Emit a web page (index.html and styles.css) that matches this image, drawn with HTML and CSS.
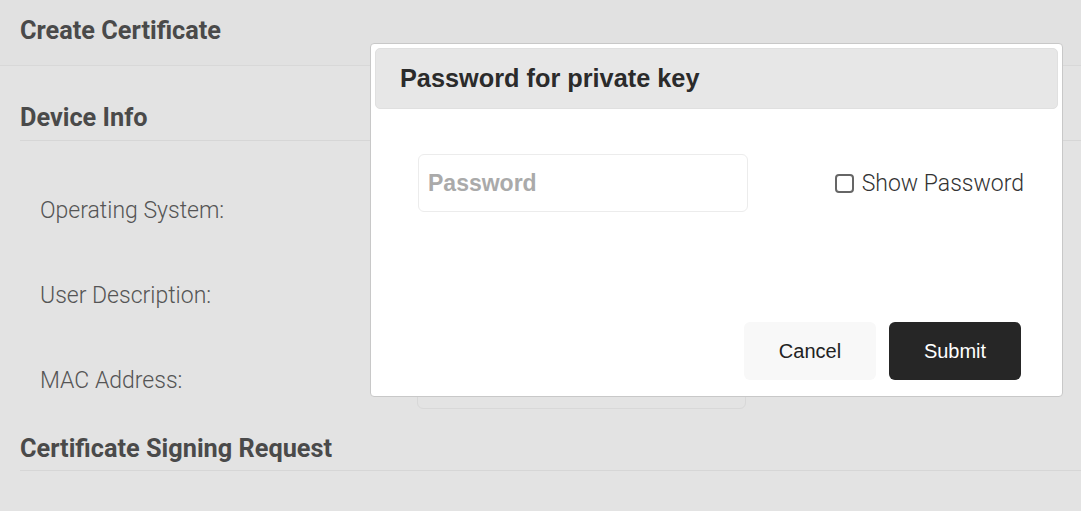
FILE: index.html
```html
<!DOCTYPE html>
<html>
<head>
<meta charset="utf-8">
<link rel="stylesheet" href="styles.css">
</head>
<body>
<div class="topbar"><h1 class="page-title">Create Certificate</h1></div>
<div class="content">
  <h2 class="section-title first">Device Info</h2>
  <div class="rows">
    <div class="row"><span class="label">Operating System:</span><div class="field"></div></div>
    <div class="row"><span class="label">User Description:</span><div class="field"></div></div>
    <div class="row"><span class="label">MAC Address:</span><div class="field"></div></div>
  </div>
  <h2 class="section-title last">Certificate Signing Request</h2>
</div>

<div class="modal">
  <div class="modal-header"><h3 class="modal-title">Password for private key</h3></div>
  <div class="modal-body">
    <input class="pw-input" type="password" placeholder="Password">
    <label class="show-pw"><span class="checkbox"></span>Show Password</label>
  </div>
  <div class="modal-footer">
    <button class="btn btn-cancel">Cancel</button>
    <button class="btn btn-submit">Submit</button>
  </div>
</div>
</body>
</html>
```

FILE: styles.css
```css
* { box-sizing: border-box; }
html, body { margin: 0; padding: 0; }
body {
  background: #e3e3e3;
  font-family: Roboto, "Liberation Sans", sans-serif;
  width: 1081px;
  height: 511px;
  overflow: hidden;
  position: relative;
}
.topbar {
  height: 66px;
  background: #e1e1e1;
  border-bottom: 1px solid #d8d8d8;
  padding-left: 20px;
  display: flex;
  align-items: center;
}
.page-title {
  margin: 0;
  margin-top: -4px;
  font-size: 25.3px;
  font-weight: 700;
  color: #4a4a4a;
  line-height: 30px;
}
.content { padding: 0 0 0 20px; }
.section-title {
  margin: 0;
  font-size: 25.3px;
  font-weight: 700;
  color: #4a4a4a;
  line-height: 30px;
  border-bottom: 1px solid #d6d6d6;
}
.section-title.first { margin-top: 37px; padding-bottom: 7px; }
.section-title.last { margin-top: 25px; padding-bottom: 6px; }
.rows {
  display: flex;
  flex-direction: column;
  gap: 27px;
  margin-top: 40px;
}
.row {
  display: flex;
  align-items: center;
  height: 58px;
}
.label {
  width: 397px;
  padding-left: 20px;
  font-size: 23px;
  font-weight: 300;
  color: #555;
}
.field {
  width: 329px;
  height: 58px;
  border: 1px solid #d8d8d8;
  border-radius: 6px;
}

.modal {
  position: absolute;
  left: 370px;
  top: 43px;
  width: 693px;
  height: 354px;
  background: #fff;
  border: 1px solid #c8c8c8;
  border-radius: 4px;
  padding: 4px;
  display: flex;
  flex-direction: column;
}
.modal-header {
  height: 61px;
  background: #e7e7e7;
  border-radius: 5px;
  border: 1px solid #e0e0e0;
  display: flex;
  align-items: center;
  padding-left: 24px;
}
.modal-title {
  margin: 0;
  font-family: "Liberation Sans", Arial, sans-serif;
  font-size: 25.3px;
  font-weight: 700;
  color: #2b2b2b;
}
.modal-body {
  flex: 1;
  display: flex;
  align-items: flex-start;
  justify-content: space-between;
  padding: 45px 34px 0 43px;
}
.pw-input {
  width: 330px;
  height: 58px;
  border: 1px solid #ececec;
  border-radius: 6px;
  padding: 0 9px;
  font-family: "Liberation Sans", Arial, sans-serif;
  font-size: 23px;
  font-weight: 700;
  outline: none;
  background: #fff;
}
.pw-input::placeholder { color: #aaa; opacity: 1; }
.show-pw {
  display: flex;
  align-items: center;
  gap: 8px;
  margin-top: 16px;
  font-size: 23px;
  font-weight: 300;
  color: #333;
}
.checkbox {
  width: 19px;
  height: 19px;
  border: 2px solid #666;
  border-radius: 4px;
  background: #fff;
  display: inline-block;
}
.modal-footer {
  display: flex;
  justify-content: flex-end;
  gap: 13px;
  padding: 0 37px 12px 0;
}
.btn {
  width: 132px;
  height: 58px;
  border: none;
  border-radius: 6px;
  font-family: "Liberation Sans", Arial, sans-serif;
  font-size: 20px;
}
.btn-cancel { background: #f8f8f8; color: #222; }
.btn-submit { background: #262626; color: #fff; }
```
